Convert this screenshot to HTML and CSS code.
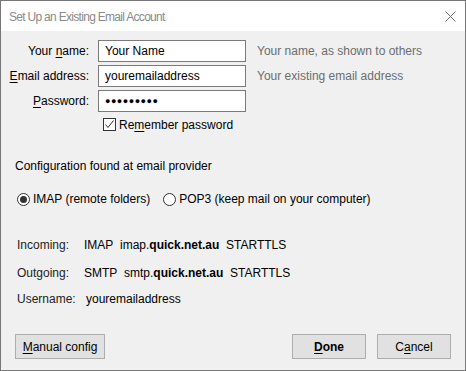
FILE: index.html
```html
<!DOCTYPE html>
<html lang="en">
<head>
    <meta charset="UTF-8">
    <meta name="viewport" content="width=device-width, initial-scale=1.0">
    <title>Set Up an Existing Email Account</title>
    <link rel="stylesheet" href="styles.css">
</head>
<body>
    <div class="window">
        <div class="titlebar">
            <span class="title">Set Up an Existing Email Account</span>
            <span class="close">
                <svg width="11" height="11" viewBox="0 0 11 11">
                    <path d="M0.5 0.5 L10.5 10.5 M10.5 0.5 L0.5 10.5" stroke="#6f6f6f" stroke-width="1" fill="none"/>
                </svg>
            </span>
        </div>

        <div class="content">
            <!-- account fields -->
            <div class="fields">
                <label class="field-label"><span>Your <u>n</u>ame:</span></label>
                <div class="input">Your Name</div>
                <span class="hint">Your name, as shown to others</span>

                <label class="field-label"><span><u>E</u>mail address:</span></label>
                <div class="input">youremailaddress</div>
                <span class="hint">Your existing email address</span>

                <label class="field-label"><span><u>P</u>assword:</span></label>
                <div class="input password">&#9679;&#9679;&#9679;&#9679;&#9679;&#9679;&#9679;&#9679;&#9679;</div>
                <span class="hint"></span>
            </div>

            <div class="remember">
                <span class="checkbox">
                    <svg width="11" height="11" viewBox="0 0 11 11">
                        <path d="M1.5 5.5 L4 8.5 L9.5 1.5" stroke="#333" stroke-width="1" fill="none"/>
                    </svg>
                </span>
                <span>Re<u>m</u>ember password</span>
            </div>

            <div class="found">Configuration found at email provider</div>

            <div class="protocols">
                <span class="radio checked"></span>
                <span class="radio-label">IMAP (remote folders)</span>
                <span class="radio"></span>
                <span class="radio-label">POP3 (keep mail on your computer)</span>
            </div>

            <!-- server details -->
            <div class="servers">
                <div class="server-row">
                    <span class="server-label">Incoming:</span>
                    <span class="server-value">IMAP&nbsp; imap.<b>quick.net.au</b>&nbsp; STARTTLS</span>
                </div>
                <div class="server-row outgoing">
                    <span class="server-label">Outgoing:</span>
                    <span class="server-value">SMTP&nbsp; smtp.<b>quick.net.au</b>&nbsp; STARTTLS</span>
                </div>
                <div class="server-row username">
                    <span class="server-label">Username:</span>
                    <span class="server-value user">youremailaddress</span>
                </div>
            </div>

            <div class="buttons">
                <a href="##" class="button manual"><span><u>M</u>anual config</span></a>
                <span class="spacer"></span>
                <a href="##" class="button done"><span><u>D</u>one</span></a>
                <a href="##" class="button cancel"><span>C<u>a</u>ncel</span></a>
            </div>
        </div>
    </div>
</body>
</html>
```

FILE: styles.css
```css
*{
    padding: 0;
    margin: 0;
    box-sizing: border-box;
}

body{
    font-family: "Liberation Sans", Arial, sans-serif;
    font-size: 12px;
    color: #000;
    background-color: #fff;
}

a{
    text-decoration: none;
    color: #000;
}

u{
    text-decoration-thickness: 1px;
    text-underline-offset: 2px;
}

.window{
    width: 466px;
    height: 371px;
    border: 1px solid #777;
    display: flex;
    flex-direction: column;
    background-color: #f0f0f0;
}

/* ==================标题栏===================== */
.titlebar{
    height: 30px;
    background-color: #fff;
    display: flex;
    align-items: center;
    padding-left: 8px;
    padding-right: 9px;
}

.titlebar .title{
    flex: 1;
    color: #8a8a8a;
    font-size: 12px;
    letter-spacing: -0.7px;
    padding-top: 1px;
}

.titlebar .close{
    display: flex;
    padding-top: 1px;
}

/* ==================内容===================== */
.content{
    flex: 1;
    display: flex;
    flex-direction: column;
    padding: 9px 0 11px 0;
}

.fields{
    display: grid;
    grid-template-columns: 80px 148px auto;
    grid-auto-rows: 22px;
    row-gap: 3px;
    column-gap: 0;
    margin-left: 8px;
}

.fields .field-label{
    display: flex;
    align-items: center;
    justify-content: flex-end;
}

.fields .input{
    margin-left: 9px;
    width: 148px;
    border: 1px solid #7a7a7a;
    background-color: #fff;
    display: flex;
    align-items: center;
    padding-left: 6px;
}

.fields .password{
    font-size: 9px;
    letter-spacing: 0.5px;
}

.fields .hint{
    display: flex;
    align-items: center;
    padding-left: 20px;
    color: #6d6d6d;
}

.remember{
    display: flex;
    align-items: center;
    height: 13px;
    margin-top: 6px;
    padding-left: 102px;
}

.remember .checkbox{
    width: 13px;
    height: 13px;
    border: 1px solid #333;
    background-color: #fff;
    display: flex;
    margin-right: 3px;
}

.found{
    margin-top: 27px;
    height: 16px;
    line-height: 16px;
    padding-left: 14px;
}

.protocols{
    display: flex;
    align-items: center;
    height: 14px;
    margin-top: 18px;
    padding-left: 16px;
}

.protocols .radio{
    width: 13px;
    height: 13px;
    border: 1px solid #333;
    border-radius: 50%;
    background-color: #fff;
    position: relative;
    margin-right: 3px;
}

.protocols .checked::after{
    content: '';
    position: absolute;
    left: 2px;
    top: 2px;
    width: 7px;
    height: 7px;
    border-radius: 50%;
    background-color: #333;
}

.protocols .radio-label{
    margin-right: 13px;
}

.servers{
    margin-top: 31px;
    padding-left: 16px;
}

.servers .server-row{
    display: flex;
    height: 16px;
    line-height: 16px;
}

.servers .outgoing{
    margin-top: 12px;
}

.servers .username{
    margin-top: 10px;
}

.servers .server-label{
    width: 67px;
    color: #222;
}

.servers .user{
    padding-left: 2px;
}

/* ==================按钮===================== */
.buttons{
    margin-top: auto;
    display: flex;
    padding-left: 14px;
    padding-right: 14px;
}

.buttons .spacer{
    flex: 1;
}

.buttons .button{
    display: flex;
    align-items: center;
    justify-content: center;
    height: 25px;
    background-color: #e1e1e1;
    border: 1px solid #adadad;
}

.buttons .manual{
    width: 90px;
}

.buttons .done{
    width: 74px;
    font-weight: bold;
    margin-right: 11px;
}

.buttons .cancel{
    width: 74px;
}
```
